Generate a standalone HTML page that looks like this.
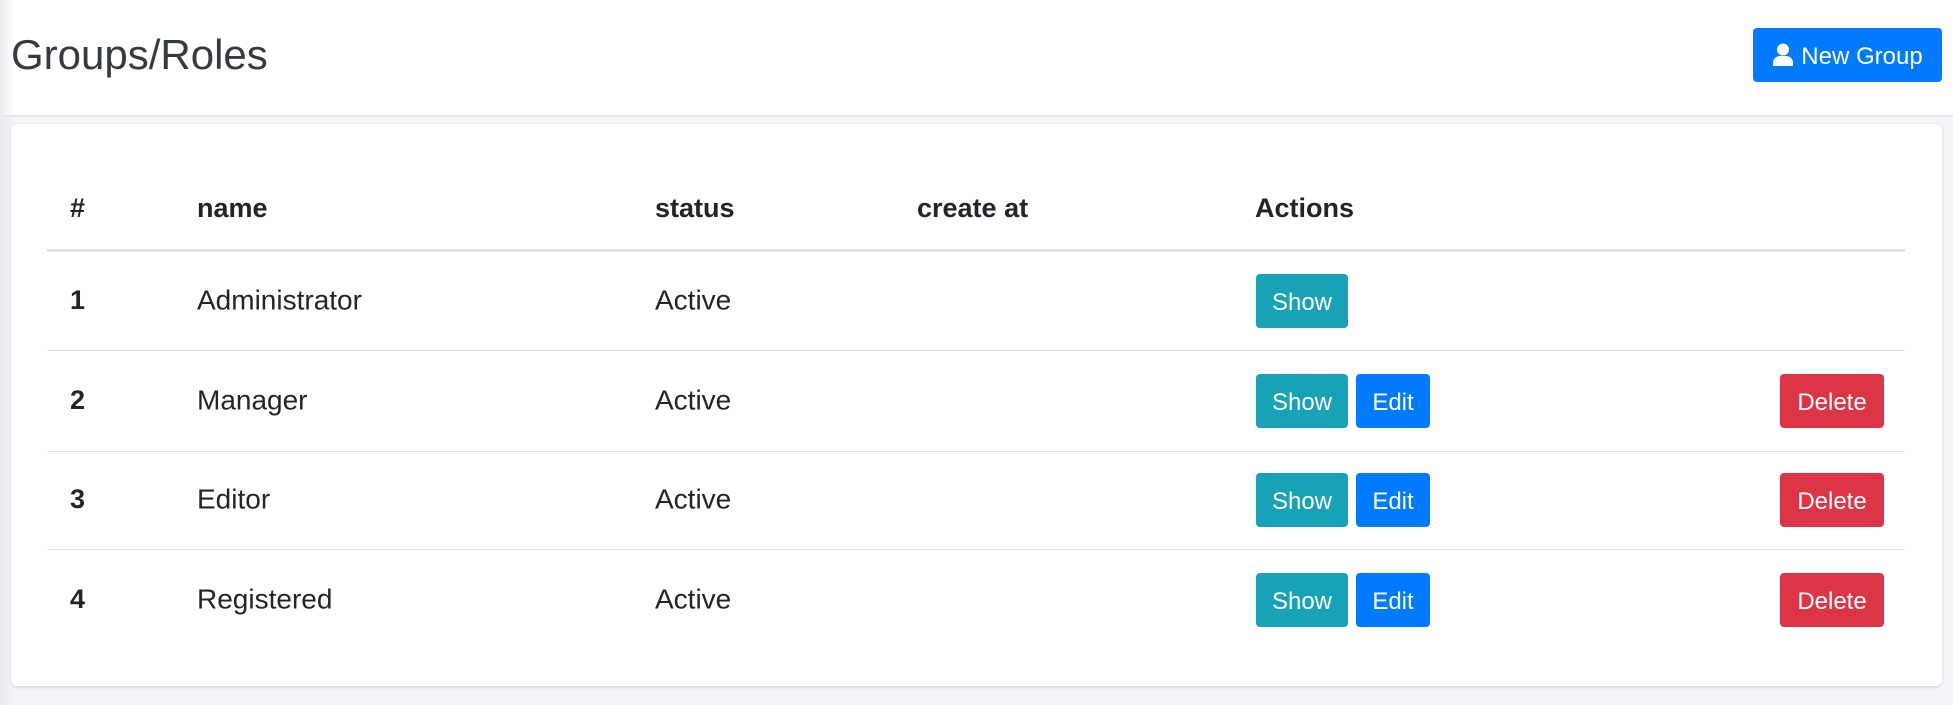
<!DOCTYPE html>
<html><head><meta charset="utf-8"><style>
*{margin:0;padding:0;box-sizing:border-box}
html,body{width:1953px;height:705px;overflow:hidden;background:#f3f4f7;font-family:"Liberation Sans",sans-serif;color:#212529}
.hdr{position:absolute;left:0;top:0;width:1953px;height:117px;background:#fff;border-bottom:2px solid #e3e5ea}
.shade{position:absolute;left:0;top:0;width:14px;height:705px;background:linear-gradient(90deg,#e9eaee,rgba(255,255,255,0));z-index:5}
h1{position:absolute;left:11px;top:34px;font-weight:400;font-size:42px;line-height:1;color:#343a40}
.btn{position:absolute;color:#fff;border-radius:4px;font-size:24px;display:flex;align-items:center;justify-content:center;padding-top:3px}
.ng{left:1753px;top:28px;width:189px;height:54px;background:#007bff;font-size:24px}
.card{position:absolute;left:11px;top:124px;width:1931px;height:562px;background:#fff;border-radius:6px;box-shadow:0 1px 3px rgba(0,0,0,.15)}
.t{position:absolute;font-size:28px;transform:translateY(-45%)}
.b{font-weight:700;font-size:27px}
.line{position:absolute;left:47px;width:1858px;height:1px;background:#dee2e6}
.show{background:#17a2b8;width:92px;height:54px}
.edit{background:#007bff;width:74px;height:54px}
.del{background:#dc3545;width:104px;height:54px}
</style></head><body>
<div class="shade"></div>
<div class="hdr"></div>
<h1>Groups/Roles</h1>
<div class="btn ng"><svg width="22" height="24" viewBox="0 0 22 24" style="margin-right:7px;margin-top:-3px"><circle cx="11" cy="6.5" r="6" fill="#fff"/><path d="M1 23v-3c0-4 3-7 7-7h6c4 0 7 3 7 7v3z" fill="#fff"/></svg>New Group</div>
<div class="card"></div>
<div class="t b" style="left:70px;top:207px">#</div>
<div class="t b" style="left:197px;top:207px">name</div>
<div class="t b" style="left:655px;top:207px">status</div>
<div class="t b" style="left:917px;top:207px">create at</div>
<div class="t b" style="left:1255px;top:207px">Actions</div>
<div class="line" style="top:249px;height:3px"></div>
<div class="line" style="top:350px"></div>
<div class="line" style="top:451px"></div>
<div class="line" style="top:549px"></div>

<div class="t b" style="left:70px;top:299px">1</div>
<div class="t" style="left:197px;top:299px">Administrator</div>
<div class="t" style="left:655px;top:299px">Active</div>
<div class="btn show" style="left:1256px;top:274px">Show</div>

<div class="t b" style="left:70px;top:399px">2</div>
<div class="t" style="left:197px;top:399px">Manager</div>
<div class="t" style="left:655px;top:399px">Active</div>
<div class="btn show" style="left:1256px;top:374px">Show</div>
<div class="btn edit" style="left:1356px;top:374px">Edit</div>
<div class="btn del" style="left:1780px;top:374px">Delete</div>

<div class="t b" style="left:70px;top:498px">3</div>
<div class="t" style="left:197px;top:498px">Editor</div>
<div class="t" style="left:655px;top:498px">Active</div>
<div class="btn show" style="left:1256px;top:473px">Show</div>
<div class="btn edit" style="left:1356px;top:473px">Edit</div>
<div class="btn del" style="left:1780px;top:473px">Delete</div>

<div class="t b" style="left:70px;top:598px">4</div>
<div class="t" style="left:197px;top:598px">Registered</div>
<div class="t" style="left:655px;top:598px">Active</div>
<div class="btn show" style="left:1256px;top:573px">Show</div>
<div class="btn edit" style="left:1356px;top:573px">Edit</div>
<div class="btn del" style="left:1780px;top:573px">Delete</div>
</body></html>
